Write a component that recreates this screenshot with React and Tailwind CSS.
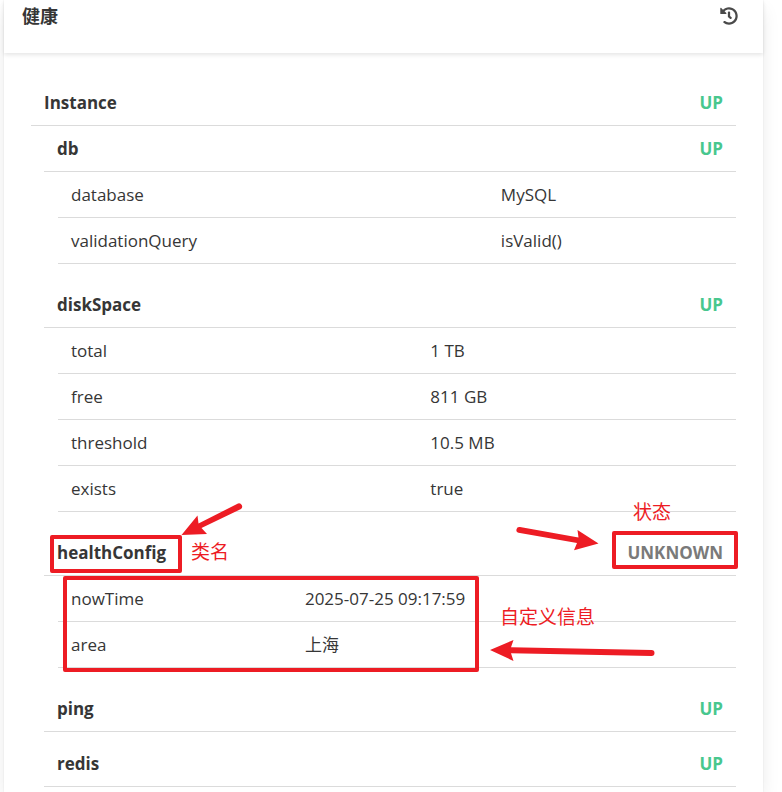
import clsx from "clsx";
import { FaHistory } from "react-icons/fa";

const sections = [
  {
    name: "db",
    status: "UP",
    keyWidth: "w-[63.4%]",
    details: [
      ["database", "MySQL"],
      ["validationQuery", "isValid()"],
    ],
  },
  {
    name: "diskSpace",
    status: "UP",
    keyWidth: "w-[53%]",
    details: [
      ["total", "1 TB"],
      ["free", "811 GB"],
      ["threshold", "10.5 MB"],
      ["exists", "true"],
    ],
  },
  {
    name: "healthConfig",
    status: "UNKNOWN",
    keyWidth: "w-[34.5%]",
    annotated: true,
    details: [
      ["nowTime", "2025-07-25 09:17:59"],
      ["area", "上海"],
    ],
  },
  { name: "ping", status: "UP", details: [] },
  { name: "redis", status: "UP", details: [] },
];

function StatusRow({ name, status }) {
  return (
    <div className="flex h-[46px] items-center justify-between border-b border-[#dbdbdb] px-[13px] font-bold">
      <h3>{name}</h3>
      <span className={status === "UP" ? "text-[#48c78e]" : "text-[#7a7a7a]"}>
        {status}
      </span>
    </div>
  );
}

function DetailsTable({ rows, keyWidth }) {
  return (
    <div className="pl-[14px]">
      <table className="w-full table-fixed border-separate border-spacing-0">
        <tbody>
          {rows.map(([key, value]) => (
            <tr key={key} className="h-[46px]">
              <th
                scope="row"
                className={clsx("border-b border-[#dbdbdb] px-[13px] text-left font-normal", keyWidth)}
              >
                {key}
              </th>
              <td className="border-b border-[#dbdbdb] px-[13px]">{value}</td>
            </tr>
          ))}
        </tbody>
      </table>
    </div>
  );
}

// red marks drawn on top of the healthConfig section
function Annotations() {
  return (
    <div className="pointer-events-none absolute inset-0 text-[19px] leading-6 text-[#ed1c24]">
      {/* class name */}
      <div className="absolute top-[5px] left-[6px] h-[38px] w-[132px] rounded-xs border-4 border-[#ed1c24]" />
      <span className="absolute top-[10px] left-[147px]">类名</span>
      <svg
        className="absolute -top-[30px] left-[136px] h-10 w-[64px]"
        viewBox="180 500 64 40"
        fill="currentColor"
      >
        <path d="M181.500 535L197.500 515.500L198.500 523.500L238 503.500A3.200 3.200 0 0 1 241 509L201.500 528L207 534Z" />
      </svg>

      {/* status */}
      <div className="absolute top-[1px] -right-[2px] h-[38px] w-[126px] rounded-xs border-4 border-[#ed1c24]" />
      <span className="absolute -top-[30px] right-[65px]">状态</span>
      <svg
        className="absolute -top-[5px] right-[136px] h-[30px] w-[86px]"
        viewBox="514 525 86 30"
        fill="currentColor"
      >
        <path d="M598.500 543.500L577.500 530L578.500 537.500L520 527A3 3 0 0 0 518.500 532.800L577 543L574 550.200Z" />
      </svg>

      {/* custom details */}
      <div className="absolute top-[46px] left-[19px] h-[96px] w-[416px] rounded-xs border-4 border-[#ed1c24]" />
      <span className="absolute top-[75px] left-[456px]">自定义信息</span>
      <svg
        className="absolute top-[106px] left-[444px] h-[30px] w-[168px]"
        viewBox="488 636 168 30"
        fill="currentColor"
      >
        <path d="M490 650L513.500 640L511 647.300L651.500 650A3 3 0 0 1 651.500 656L511 653.200L513.500 661Z" />
      </svg>
    </div>
  );
}

function Section({ section }) {
  const { name, status, keyWidth, details, annotated } = section;

  return (
    <section className={clsx("relative", details.length > 0 ? "mb-[18px]" : "mb-[9px]")}>
      <StatusRow name={name} status={status} />
      {details.length > 0 && <DetailsTable rows={details} keyWidth={keyWidth} />}
      {annotated && <Annotations />}
    </section>
  );
}

function App() {
  return (
    <div className="h-screen overflow-hidden bg-white pr-[19px] pl-1 font-['Open_Sans','Noto_Sans_CJK_SC',sans-serif] text-[17px] leading-6 text-[#363636]">
      <div className="min-h-screen bg-white shadow-[0_8px_18px_-2px_rgba(10,10,10,0.1),0_0_0_1px_rgba(10,10,10,0.02)]">
        <header className="flex items-start justify-between pt-1 pr-[25px] pb-[25px] pl-[18px] shadow-[0_2px_4px_rgba(10,10,10,0.1)]">
          <h2 className="text-lg leading-6 font-bold">健康</h2>
          <button type="button" aria-label="历史" className="flex h-6 items-center text-[#4a4a4a]">
            <FaHistory className="size-[18px]" />
          </button>
        </header>

        <main className="px-[27px] pt-[27px]">
          <StatusRow name="Instance" status="UP" />
          <div className="pl-[13px]">
            {sections.map((section) => (
              <Section key={section.name} section={section} />
            ))}
          </div>
        </main>
      </div>
    </div>
  );
}

export default App;
